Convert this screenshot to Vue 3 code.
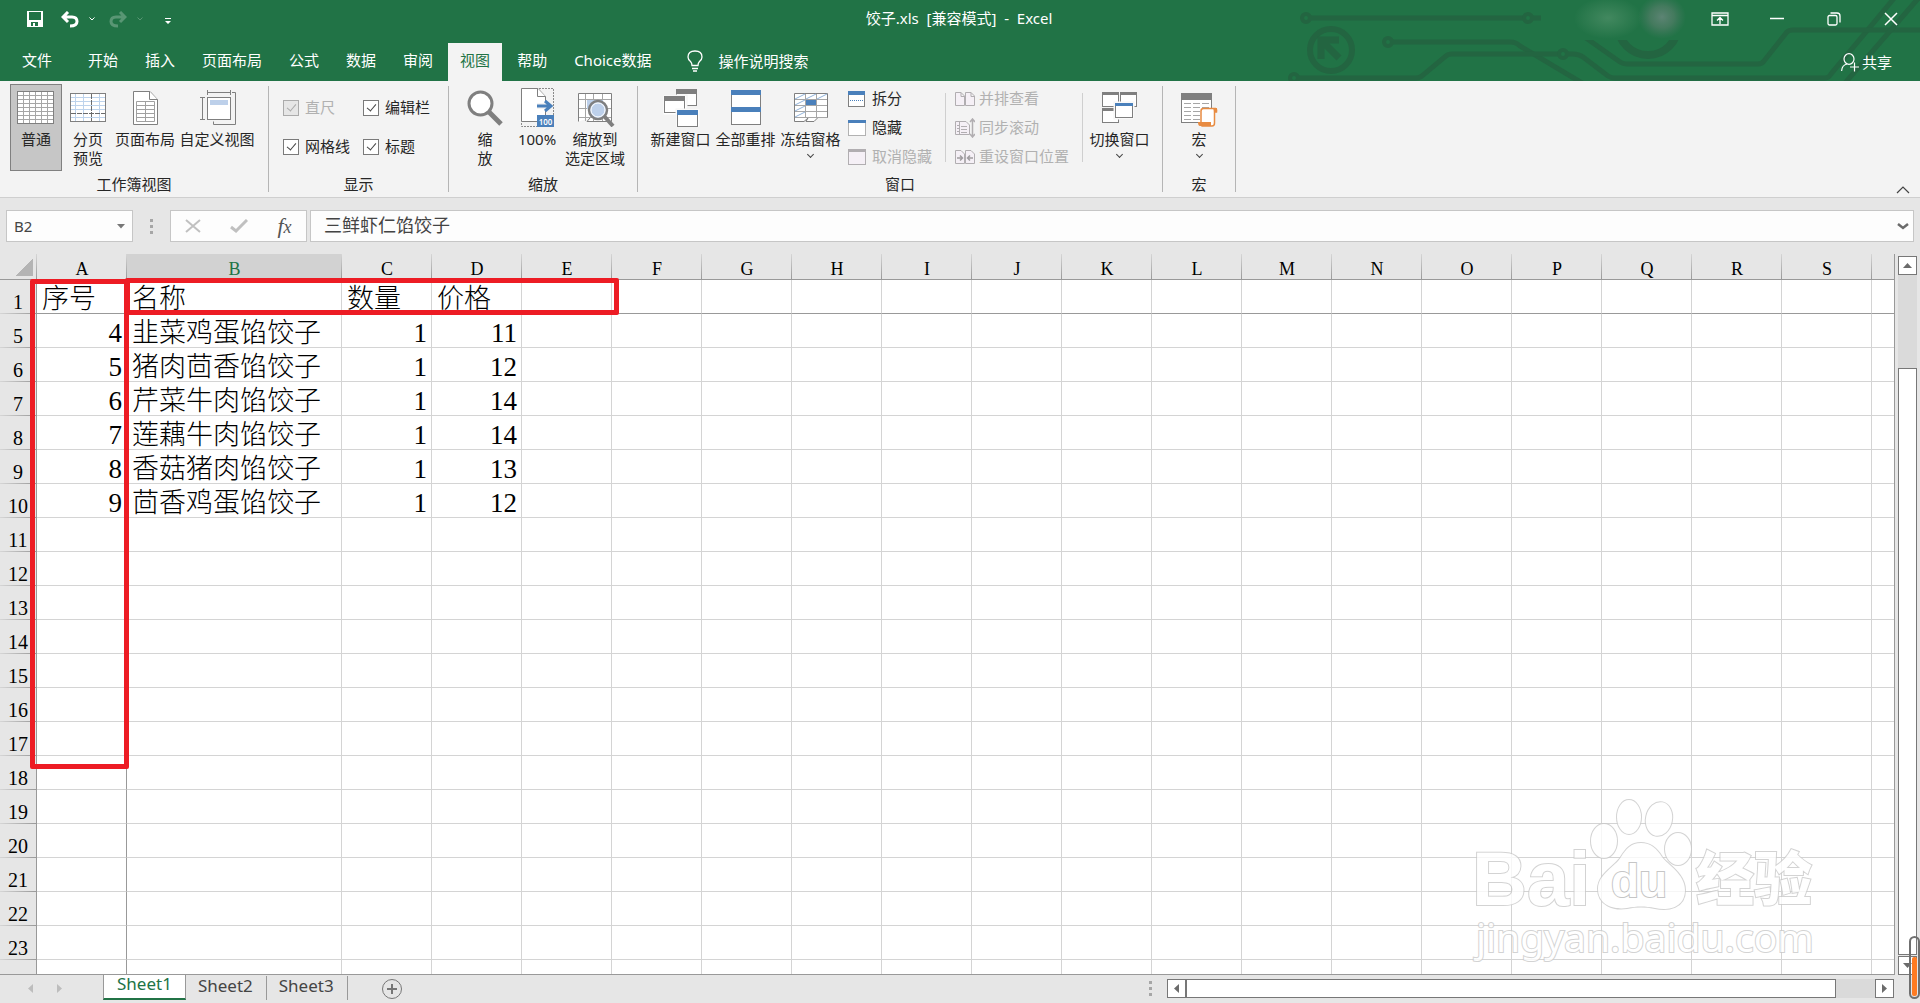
<template>
  <div class="excel">
    <header class="top">
      <svg class="circuit" width="640" height="81" viewBox="0 0 640 81" aria-hidden="true">
        <defs>
          <radialGradient id="glowA"><stop offset="0" stop-color="#42885f" /><stop offset="1" stop-color="#42885f" stop-opacity="0" /></radialGradient>
          <radialGradient id="glowB"><stop offset="0" stop-color="#5d8474" /><stop offset="0.5" stop-color="#4d7c64" stop-opacity="0.8" /><stop offset="1" stop-color="#42785f" stop-opacity="0" /></radialGradient>
        </defs>
        <g fill="none" stroke="#236541" stroke-width="5">
          <circle cx="26" cy="18" r="4" stroke-width="4" />
          <path d="M31 18H243" />
          <circle cx="248" cy="18" r="4" stroke-width="4" />
          <path d="M253 18H265" />
          <circle cx="51" cy="50" r="21" stroke-width="6" />
          <path d="M41 59V40H59M42 41L59 58" stroke-width="7" />
          <circle cx="108" cy="42" r="4" stroke-width="4" />
          <path d="M113 42H230Q236 42 240 46L302 83" />
          <circle cx="14" cy="78" r="4" stroke-width="4" />
          <path d="M19 78H136Q140 78 143 75L166 56Q168 54 172 54H278" />
          <circle cx="283" cy="54" r="4" stroke-width="4" />
          <path d="M288 54H293Q299 54 303 57L328 76Q331 78 335 78H545Q549 78 551 74L616 -4" />
          <path d="M306 38L340 62Q343 64 347 64H478Q482 64 484 61L507 32Q509 30 513 30H640" />
          <path d="M565 83L642 -6" />
          <circle cx="368" cy="25" r="30" stroke-width="8" />
        </g>
        <rect x="261" width="157" height="40" fill="#217346" />
        <ellipse cx="328" cy="18" rx="34" ry="21" fill="url(#glowA)" />
        <ellipse cx="382" cy="17" rx="24" ry="22" fill="url(#glowB)" />
      </svg>

      <div class="titlebar">
        <div class="quick">
          <button type="button" class="qa save" aria-label="保存">
            <svg width="16" height="16" viewBox="0 0 16 16"><path fill="#fff" fill-rule="evenodd" d="M0 0H16V16H0ZM2 1V9H14V1ZM4 11V15H6V12H8V15H11V11Z" /></svg>
          </button>
          <button type="button" class="qa undo" aria-label="撤消">
            <svg width="18" height="17" viewBox="0 0 18 17"><path fill="none" stroke="#fff" stroke-width="3" d="M7 1L2 6L7 11M2 6H11Q16 6 16 10.500Q16 15 9 15" /></svg>
          </button>
          <button type="button" class="qa drop" aria-label="撤消列表">
            <svg width="6" height="4" viewBox="0 0 6 4"><path fill="none" stroke="#fff" d="M0.500 0.500L3 3L5.500 0.500" /></svg>
          </button>
          <button type="button" class="qa undo dim" aria-label="恢复">
            <svg width="18" height="17" viewBox="0 0 18 17"><path fill="none" stroke="#fff" stroke-width="3" d="M11 1L16 6L11 11M16 6H7Q2 6 2 10.500Q2 15 9 15" /></svg>
          </button>
          <button type="button" class="qa drop dim" aria-label="恢复列表">
            <svg width="6" height="4" viewBox="0 0 6 4"><path fill="none" stroke="#fff" d="M0.500 0.500L3 3L5.500 0.500" /></svg>
          </button>
          <button type="button" class="qa more" aria-label="自定义快速访问工具栏">
            <svg width="6" height="7" viewBox="0 0 6 7"><path fill="#fff" d="M0 0H6V1H0ZM0 3H6L3 6Z" /></svg>
          </button>
        </div>
        <div class="doc-title">饺子.xls&nbsp; [兼容模式]&nbsp; -&nbsp; Excel</div>
        <div class="win-buttons">
          <button type="button" aria-label="功能区显示选项">
            <svg width="18" height="14" viewBox="0 0 18 14"><path fill="none" stroke="#fff" stroke-width="1.300" d="M1 1H17V13H1ZM1 3.500H17M9 12V6M6 8.500L9 5.500L12 8.500" /></svg>
          </button>
          <button type="button" aria-label="最小化">
            <svg width="14" height="14" viewBox="0 0 14 14"><path stroke="#fff" stroke-width="1.500" d="M0 6.500H14" /></svg>
          </button>
          <button type="button" aria-label="还原">
            <svg width="14" height="14" viewBox="0 0 14 14"><g fill="none" stroke="#fff" stroke-width="1.300"><rect x="1" y="3.500" width="9" height="9.500" rx="1.500" /><path d="M3.500 1H10Q13 1 13 4V10.500" /></g></svg>
          </button>
          <button type="button" aria-label="关闭">
            <svg width="14" height="14" viewBox="0 0 14 14"><path stroke="#fff" stroke-width="1.500" d="M1 1L13 13M13 1L1 13" /></svg>
          </button>
        </div>
      </div>

      <nav class="tabs">
        <button v-for="tab in tabs" :key="tab" type="button" class="tab" :class="{ active: tab === activeTab, file: tab === '文件' }" @click="activeTab = tab">{{ tab }}</button>
        <button type="button" class="tell-me">
          <svg width="16" height="22" viewBox="0 0 16 22"><path fill="none" stroke="#fff" stroke-width="1.300" d="M5 15.500Q5 13 3.500 11.500Q1 9.500 1 7Q1 1 8 1Q15 1 15 7Q15 9.500 12.500 11.500Q11 13 11 15.500ZM5 18.500H11M6 21H10" /></svg>
          <span>操作说明搜索</span>
        </button>
        <button type="button" class="share">
          <svg width="18" height="19" viewBox="0 0 18 19"><g fill="none" stroke="#fff" stroke-width="1.200"><ellipse cx="8" cy="6" rx="5" ry="5.300" /><path d="M0.600 18Q1 12 6 11M13.500 9.500V18.500M9 14H18" /></g></svg>
          <span>共享</span>
        </button>
      </nav>
    </header>

    <section class="ribbon">
      <div class="group">
        <div class="tools">
          <button type="button" class="big w52 pressed">
            <svg width="40" height="40" viewBox="0 0 40 40"><rect x="1.500" y="4.500" width="36" height="32" fill="#fff" stroke="#7f7f7f" /><path stroke="#a6a6a6" d="M7.500 5V36M13.500 5V36M19.500 5V36M25.500 5V36M31.500 5V36M2 8.500H37M2 12.500H37M2 16.500H37M2 20.500H37M2 24.500H37M2 28.500H37M2 32.500H37" /></svg>
            <span>普通</span>
          </button>
          <button type="button" class="big w52">
            <svg width="40" height="40" viewBox="0 0 40 40"><rect x="2.500" y="6.500" width="35" height="28" fill="#fff" stroke="#7f7f7f" /><path stroke="#bdd3ec" d="M7.500 7V34M15.500 7V34M31.500 7V34M3 10.500H37M3 14.500H37M3 18.500H37M3 22.500H37M3 30.500H37" /><path stroke="#6b6b6b" stroke-dasharray="5 1" d="M23.500 7V34M3 26.500H37" /></svg>
            <span>分页<br>预览</span>
          </button>
          <button type="button" class="big w62">
            <svg width="40" height="40" viewBox="0 0 40 40"><path fill="#fff" stroke="#7f7f7f" d="M8.500 4.500H25L32.500 12.500V37.500H8.500Z" /><path fill="#fff" stroke="#7f7f7f" d="M24.500 4.500V12.500H32.500" /><path fill="none" stroke="#a0a0a0" d="M11.500 14.500H29.500V34.500H11.500ZM20.500 15V34M12 18.500H29M12 22.500H29M12 26.500H29M12 30.500H29" /></svg>
            <span>页面布局</span>
          </button>
          <button type="button" class="big w82">
            <svg width="40" height="40" viewBox="0 0 40 40"><path fill="none" stroke="#7f7f7f" d="M10.500 5.500H33.500M10.500 3V8M33.500 3V8M5.500 10.500V32.500M3 10.500H8M3 32.500H8M35 5.500H38.500V37.500H16.500V34.500" /><rect x="10.500" y="10.500" width="23" height="22" fill="#fff" stroke="#7f7f7f" /><rect x="13" y="13" width="18" height="5" fill="#bdd0ea" /></svg>
            <span>自定义视图</span>
          </button>
        </div>
        <div class="caption">工作簿视图</div>
      </div>

      <div class="group">
        <div class="tools checks">
          <label v-for="opt in showOptions" :key="opt.text" :class="{ off: opt.disabled }">
            <input type="checkbox" v-model="opt.on" :disabled="opt.disabled">
            <span>{{ opt.text }}</span>
          </label>
        </div>
        <div class="caption">显示</div>
      </div>

      <div class="group">
        <div class="tools">
          <button type="button" class="big w52">
            <svg width="40" height="40" viewBox="0 0 40 40"><path stroke="#7f7f7f" stroke-width="5" d="M23 24L36 37" /><circle cx="15.500" cy="16.500" r="11.500" fill="#fff" stroke="#7f7f7f" stroke-width="3" /></svg>
            <span>缩<br>放</span>
          </button>
          <button type="button" class="big w52">
            <svg width="40" height="40" viewBox="0 0 40 40"><path fill="none" stroke="#8a8a8a" stroke-dasharray="2 1" d="M22 1.500H36.500V28M4.500 36V39.500H20" /><path fill="#fff" stroke="#7f7f7f" d="M20 34.500H4.500V1.500H21L28.500 9.500V34.500Z" /><path fill="#fff" stroke="#7f7f7f" d="M20.500 1.500V9.500H28.500" /><path fill="none" stroke="#f3f3f3" stroke-width="6" d="M20 19H35" /><path fill="none" stroke="#4a80bb" stroke-width="3" d="M20 19H34M28 14L34 19L28 24" /><rect x="20" y="28" width="17" height="12" fill="#4a80bb" /><text x="28.500" y="37.500" font-size="8" font-weight="600" text-anchor="middle" fill="#fff">100</text></svg>
            <span>100%</span>
          </button>
          <button type="button" class="big w64">
            <svg width="40" height="40" viewBox="0 0 40 40"><path fill="#fff" stroke="#7f7f7f" d="M3.500 34.500V6.500H36.500V34.500H12L15 31" /><path stroke="#a6a6a6" d="M10.500 7V34M18.500 7V34M27.500 7V34M4 12.500H36M4 21.500H36M4 30.500H36" /><rect x="12" y="13" width="16" height="9" fill="#bdd0ea" /><path stroke="#7f7f7f" stroke-width="4" d="M29 29L38 39" /><circle cx="23" cy="23" r="9" fill="#bdd0ea" stroke="#7f7f7f" stroke-width="2.500" /><circle cx="23" cy="23" r="7" fill="none" stroke="#fff" /></svg>
            <span>缩放到<br>选定区域</span>
          </button>
        </div>
        <div class="caption">缩放</div>
      </div>

      <div class="group">
        <div class="tools">
          <button type="button" class="big w65">
            <svg width="40" height="40" viewBox="0 0 40 40">
              <g fill="#fff" stroke="#7f7f7f"><rect x="15.500" y="2.500" width="20" height="16" /><path d="M15.500 4.500H35.500" stroke-width="5" /><rect x="2" y="8" width="24" height="20" stroke="#f3f3f3" /><rect x="3.500" y="9.500" width="20" height="16" /><path d="M3.500 11.500H23.500" stroke-width="5" /><rect x="15" y="22" width="24" height="18" stroke="#f3f3f3" /><rect x="16.500" y="23.500" width="20" height="16" /><path d="M16 25.500H37" stroke="#4a80bb" stroke-width="5" /></g>
            </svg>
            <span>新建窗口</span>
          </button>
          <button type="button" class="big w65">
            <svg width="40" height="40" viewBox="0 0 40 40"><rect x="5.500" y="3.500" width="29" height="34" fill="#fff" stroke="#7f7f7f" /><path fill="#4a80bb" d="M5 3H35V8H5ZM5 20H35V25H5Z" /></svg>
            <span>全部重排</span>
          </button>
          <button type="button" class="big w65">
            <svg width="40" height="40" viewBox="0 0 40 40"><path fill="#fff" stroke="#7f7f7f" d="M3.500 6.500H36.500V30.500H27L23 34.500H15L17 31L13 34.500H3.500Z" /><path stroke="#a6a6a6" d="M14.500 7V31M25.500 7V31M4 12.500H36M4 18.500H36M4 24.500H36M4 30.500H36" /><path stroke="#8fb2da" d="M4 12L14 7M15 12L25 7M26 12L36 7M4 18L14 13M4 24L14 19M4 30L14 25" /><rect x="15" y="13" width="10" height="5" fill="#4a80bb" /></svg>
            <span>冻结窗格</span>
            <i class="arrow"></i>
          </button>
          <div class="small-list">
            <button type="button" class="small">
              <svg width="18" height="18" viewBox="0 0 18 18"><rect x="0.500" y="1.500" width="16" height="15" fill="#fff" stroke="#7f7f7f" /><path fill="#4a80bb" d="M0 1H17V5H0Z" /><path stroke="#4a80bb" stroke-dasharray="1 1" d="M2 10.500H16" /></svg>
              <span>拆分</span>
            </button>
            <button type="button" class="small">
              <svg width="18" height="18" viewBox="0 0 18 18"><rect x="0.500" y="1.500" width="17" height="15" fill="#fff" stroke="#6b6b6b" stroke-dasharray="1 1" /><path fill="#4a80bb" d="M0 1H18V4H0Z" /></svg>
              <span>隐藏</span>
            </button>
            <button type="button" class="small" disabled>
              <svg width="18" height="18" viewBox="0 0 18 18"><rect x="0.500" y="1.500" width="17" height="15" fill="#f5f0f6" stroke="#b1aeb1" /><path fill="#b1aeb1" d="M0 1H18V4H0Z" /></svg>
              <span>取消隐藏</span>
            </button>
          </div>
          <div class="small-list ruled">
            <button type="button" class="small" disabled>
              <svg width="20" height="18" viewBox="0 0 20 18"><path fill="#f5f0f6" stroke="#b1aeb1" d="M0.500 2.500H6L9.500 6V15.500H0.500ZM10.500 2.500H16L19.500 6V15.500H10.500ZM6 2.500V6.500H9M16 2.500V6.500H19" /></svg>
              <span>并排查看</span>
            </button>
            <button type="button" class="small" disabled>
              <svg width="20" height="20" viewBox="0 0 20 20"><path fill="#f5f0f6" stroke="#b1aeb1" d="M5 3.500H0.500V16.500H5M4.500 3.500H11L14.500 7V16.500H4.500ZM6 8.500H12M6 11.500H12M6 14.500H12M2 7.500H4M2 10.500H4M2 13.500H4" /><path fill="none" stroke="#b1aeb1" stroke-width="1.500" d="M17.500 1V19M15 4L17.500 1L20 4M15 16L17.500 19L20 16" /></svg>
              <span>同步滚动</span>
            </button>
            <button type="button" class="small" disabled>
              <svg width="20" height="18" viewBox="0 0 20 18"><path fill="#f5f0f6" stroke="#b1aeb1" d="M0.500 2.500H6L9.500 6V15.500H0.500ZM10.500 2.500H16L19.500 6V15.500H10.500Z" /><path fill="none" stroke="#9f9c9f" stroke-width="1.500" d="M2 10H7.500M5 7.500L7.500 10L5 12.500M18 10H12.500M15 7.500L12.500 10L15 12.500" /></svg>
              <span>重设窗口位置</span>
            </button>
          </div>
          <button type="button" class="big w65">
            <svg width="40" height="40" viewBox="0 0 40 40">
              <g fill="#fff" stroke="#7f7f7f"><rect x="2.500" y="5.500" width="16" height="14" /><path d="M2 6.500H19" stroke-width="3" /><rect x="20.500" y="5.500" width="16" height="14" /><path d="M20 6.500H37" stroke-width="3" /><rect x="2.500" y="21.500" width="16" height="14" /><path d="M2 22.500H19" stroke-width="3" /><rect x="14" y="15" width="20" height="17" stroke="#f3f3f3" /><rect x="15.500" y="16.500" width="17" height="14" /><path d="M15 17.500H33" stroke="#4a80bb" stroke-width="3" /></g>
            </svg>
            <span>切换窗口</span>
            <i class="arrow"></i>
          </button>
        </div>
        <div class="caption">窗口</div>
      </div>

      <div class="group">
        <div class="tools">
          <button type="button" class="big w52">
            <svg width="40" height="40" viewBox="0 0 40 40"><rect x="2.500" y="6.500" width="30" height="29" fill="#fff" stroke="#7f7f7f" /><path fill="#7f7f7f" d="M2 6H33V13H2Z" /><path stroke="#a6a6a6" stroke-dasharray="7 2" d="M5 16.500H30M5 20.500H30M5 24.500H30M5 28.500H30M5 32.500H30" /><path fill="#fff" stroke="#e88b41" stroke-width="1.500" d="M22 36V24Q22 21.500 24.500 21.500H36.500Q38 22 37.500 25H35.500V36Q35.500 39 33 39H23Z" /><path fill="#e88b41" d="M19 35H32V39H21Q19 39 19 35ZM34 21H38V25H35Z" /></svg>
            <span>宏</span>
            <i class="arrow"></i>
          </button>
        </div>
        <div class="caption">宏</div>
      </div>

      <button type="button" class="collapse" aria-label="折叠功能区">
        <svg width="14" height="8" viewBox="0 0 14 8"><path fill="none" stroke="#444" stroke-width="1.200" d="M1 7L7 1L13 7" /></svg>
      </button>
    </section>

    <section class="formula-bar">
      <div class="name-box">
        <input type="text" v-model="cellName" aria-label="名称框">
        <svg width="8" height="5" viewBox="0 0 8 5"><path fill="#777" d="M0 0H8L4 4.500Z" /></svg>
      </div>
      <i class="grip"></i>
      <div class="fx-buttons">
        <button type="button" aria-label="取消"><svg width="16" height="14" viewBox="0 0 16 14"><path stroke="#c0c0c0" stroke-width="2" d="M1 1L15 13M15 1L1 13" /></svg></button>
        <button type="button" aria-label="输入"><svg width="18" height="14" viewBox="0 0 18 14"><path fill="none" stroke="#c0c0c0" stroke-width="3" d="M1 8L6 12L17 1" /></svg></button>
        <button type="button" class="fx" aria-label="插入函数">f<small>x</small></button>
      </div>
      <div class="formula">
        <input type="text" v-model="formula" aria-label="编辑栏">
        <svg width="12" height="7" viewBox="0 0 12 7"><path fill="none" stroke="#6b6b6b" stroke-width="2.500" d="M1 1L6 5L11 1" /></svg>
      </div>
    </section>

    <main class="sheet">
      <div class="grid">
        <table>
          <colgroup>
            <col class="c-head"><col class="c-std"><col class="c-name">
            <col v-for="n in 17" :key="n" class="c-std"><col>
          </colgroup>
          <thead>
            <tr>
              <th class="corner"></th>
              <th v-for="c in columns" :key="c" :class="{ selected: c === 'B' }">{{ c }}</th>
              <th></th>
            </tr>
          </thead>
          <tbody>
            <tr v-for="row in rows" :key="row.no" :class="{ frozen: row.no === 1 }">
              <th>{{ row.no }}</th>
              <td v-for="(c, i) in columns" :key="c" :class="{ num: typeof row.cells[i] === 'number' }">{{ row.cells[i] }}</td>
              <td></td>
            </tr>
            <tr><th></th><td v-for="c in columns" :key="c"></td><td></td></tr>
          </tbody>
        </table>
        <div class="mark mark-col"></div>
        <div class="mark mark-row"></div>
        <svg class="watermark" width="360" height="180" viewBox="0 0 360 180" aria-hidden="true">
          <g fill="#fff" stroke="#c9c9c9" stroke-width="2" paint-order="stroke">
            <text class="wm-bold" x="12" y="111" font-size="76">Bai</text>
            <ellipse cx="144" cy="47" rx="13" ry="17" />
            <ellipse cx="169" cy="23" rx="12" ry="17" />
            <ellipse cx="199" cy="25" rx="13" ry="17" transform="rotate(12 199 25)" />
            <ellipse cx="218" cy="55" rx="13" ry="16" />
            <path d="M181 49C191 49 197 55 202 63C208 71 225 80 225 96C225 114 208 117 195 114C185 112 177 112 167 114C154 116 138 111 138 95C138 80 155 73 161 63C166 55 171 49 181 49Z" />
            <text class="wm-bold" x="151" y="103" font-size="46" stroke="#b8b8b8">du</text>
            <text class="wm-cjk" x="236" y="106" font-size="58">经验</text>
            <text x="16" y="158" font-size="39">jingyan.baidu.com</text>
          </g>
        </svg>
      </div>
      <div class="vscroll">
        <button type="button" aria-label="向上滚动"><svg width="9" height="5" viewBox="0 0 9 5"><path fill="#6b6b6b" d="M0 5H9L4.500 0Z" /></svg></button>
        <div class="v-track"></div>
        <div class="v-thumb"></div>
        <button type="button" aria-label="向下滚动"><svg width="9" height="5" viewBox="0 0 9 5"><path fill="#6b6b6b" d="M0 0H9L4.500 5Z" /></svg></button>
      </div>
    </main>

    <footer class="bottom">
      <div class="sheet-nav">
        <button type="button" aria-label="上一个工作表"><svg width="5" height="9" viewBox="0 0 5 9"><path fill="#bdbdbd" d="M5 0V9L0 4.500Z" /></svg></button>
        <button type="button" aria-label="下一个工作表"><svg width="5" height="9" viewBox="0 0 5 9"><path fill="#bdbdbd" d="M0 0V9L5 4.500Z" /></svg></button>
      </div>
      <button v-for="s in sheets" :key="s" type="button" class="sheet-tab" :class="{ current: s === activeSheet }" @click="activeSheet = s">{{ s }}</button>
      <button type="button" class="add" aria-label="新工作表">
        <svg width="22" height="22" viewBox="0 0 22 22"><g fill="none" stroke="#777"><circle cx="11" cy="11" r="9.500" /><path stroke-width="2" d="M11 6V16M6 11H16" /></g></svg>
      </button>
      <i class="grip"></i>
      <div class="hscroll">
        <button type="button" aria-label="向左滚动"><svg width="5" height="9" viewBox="0 0 5 9"><path fill="#6b6b6b" d="M5 0V9L0 4.500Z" /></svg></button>
        <div class="h-thumb"></div>
        <div class="h-track"></div>
        <button type="button" aria-label="向右滚动"><svg width="5" height="9" viewBox="0 0 5 9"><path fill="#6b6b6b" d="M0 0V9L5 4.500Z" /></svg></button>
      </div>
    </footer>
    <div class="meter"><i></i></div>
  </div>
</template>

<script setup>
import { ref } from 'vue';

const tabs = ['文件', '开始', '插入', '页面布局', '公式', '数据', '审阅', '视图', '帮助', 'Choice数据'];
const activeTab = ref('视图');

const showOptions = ref([
  { text: '直尺', on: true, disabled: true },
  { text: '编辑栏', on: true, disabled: false },
  { text: '网格线', on: true, disabled: false },
  { text: '标题', on: true, disabled: false },
]);

const cellName = ref('B2');
const formula = ref('三鲜虾仁馅饺子');

const columns = 'ABCDEFGHIJKLMNOPQRS'.split('');

// rows 2-4 are scrolled away under the frozen first row
const rows = [
  { no: 1, cells: ['序号', '名称', '数量', '价格'] },
  { no: 5, cells: [4, '韭菜鸡蛋馅饺子', 1, 11] },
  { no: 6, cells: [5, '猪肉茴香馅饺子', 1, 12] },
  { no: 7, cells: [6, '芹菜牛肉馅饺子', 1, 14] },
  { no: 8, cells: [7, '莲藕牛肉馅饺子', 1, 14] },
  { no: 9, cells: [8, '香菇猪肉馅饺子', 1, 13] },
  { no: 10, cells: [9, '茴香鸡蛋馅饺子', 1, 12] },
];
for (let no = 11; no <= 23; no++) {
  rows.push({ no, cells: [] });
}

const sheets = ['Sheet1', 'Sheet2', 'Sheet3'];
const activeSheet = ref('Sheet1');
</script>

<style>
body {
  margin: 0;
}
</style>

<style scoped>
.excel {
  position: relative;
  display: flex;
  flex-direction: column;
  height: 100vh;
  overflow: hidden;
  background: #e6e6e6;
  color: #262626;
  font: 15px/19px "Noto Sans", "Noto Sans CJK SC", sans-serif;
}

*,
*::after {
  box-sizing: border-box;
}

button,
input {
  font: inherit;
  color: inherit;
}

button {
  padding: 0;
  border: 0;
  background: none;
}

svg {
  display: block;
  flex: none;
}

/* title bar and tabs */
.top {
  position: relative;
  background: #217346;
  color: #fff;
}

.circuit {
  position: absolute;
  top: 0;
  right: 0;
}

.titlebar {
  position: relative;
  display: grid;
  grid-template-columns: 1fr auto 1fr;
  height: 43px;
  padding-bottom: 5px;
}

.quick,
.win-buttons {
  display: flex;
  align-items: center;
}

.quick {
  padding-left: 27px;
}

.undo {
  margin-left: 18px;
}

.drop {
  margin: 0 -4px 0 10px;
}

.more {
  margin: 4px 0 0 26px;
}

.dim {
  opacity: 0.25;
}

.doc-title {
  align-self: center;
  padding: 0 2px 1px 0;
}

.win-buttons {
  justify-content: flex-end;
  padding-right: 1px;
}

.win-buttons button {
  display: flex;
  justify-content: center;
  width: 57px;
}

.tabs {
  position: relative;
  display: flex;
  gap: 3px;
  height: 38px;
}

.tab {
  padding: 0 12px 3px;
}

.tab.file {
  margin-right: 9px;
  padding-left: 22px;
}

.tab.active {
  background: #f3f3f3;
  color: #217346;
}

.tell-me {
  display: flex;
  align-items: center;
  gap: 16px;
  margin-left: 20px;
  padding-bottom: 2px;
}

.share {
  display: flex;
  align-items: center;
  gap: 3px;
  margin: 0 28px 0 auto;
}

/* ribbon */
.ribbon {
  position: relative;
  display: flex;
  height: 117px;
  background: #f3f3f3;
  border-bottom: 1px solid #cfcfcf;
}

.group {
  display: flex;
  flex-direction: column;
  height: 106px;
  margin-top: 5px;
  padding: 0 10px;
  border-right: 1px solid #b5b5b5;
}

.tools {
  display: flex;
  flex: none;
  height: 87px;
  margin-top: -2px;
}

.caption {
  margin-top: 4px;
  text-align: center;
}

.big {
  display: flex;
  flex-direction: column;
  align-items: center;
  gap: 3px;
  padding-top: 2px;
  border: 1px solid transparent;
  white-space: nowrap;
}

.w52 {
  width: 52px;
}

.w62 {
  width: 62px;
}

.w64 {
  width: 64px;
}

.w65 {
  width: 65px;
}

.w82 {
  width: 82px;
}

.pressed {
  background: #c6c6c6;
  border-color: #808080;
}

.arrow {
  width: 5px;
  height: 5px;
  border: solid #444;
  border-width: 0 1px 1px 0;
  transform: rotate(45deg);
}

.checks {
  display: grid;
  grid-template-columns: 80px 71px;
  grid-template-rows: 39px 39px;
  padding: 4px;
}

.checks label {
  display: flex;
  align-items: center;
  gap: 6px;
  white-space: nowrap;
}

.checks input {
  position: relative;
  width: 16px;
  height: 16px;
  margin: 0;
  appearance: none;
  background: #fff;
  border: 1px solid #7a7a7a;
}

.checks input:checked::after {
  content: "";
  position: absolute;
  top: 1px;
  left: 5px;
  width: 5px;
  height: 9px;
  border: solid #444;
  border-width: 0 1px 1px 0;
  transform: rotate(40deg);
}

.checks .off {
  color: #b1b1b1;
}

.checks .off input {
  background: #e6e6e6;
  border-color: #ababab;
}

.checks .off input:checked::after {
  border-color: #ababab;
}

.small-list {
  display: flex;
  flex-direction: column;
  height: 87px;
  padding: 0 13px 0 5px;
}

.small-list.ruled {
  height: 69px;
  margin: 9px 4px 0 0;
  padding-left: 9px;
  border: solid #cfcfcf;
  border-width: 0 1px;
}

.small-list.ruled .small {
  gap: 4px;
}

.small-list.ruled .small:first-child {
  margin-top: -9px;
}

.small {
  display: flex;
  flex: none;
  align-items: center;
  gap: 6px;
  height: 29px;
  white-space: nowrap;
}

.small:disabled {
  color: #b1b1b1;
}

.collapse {
  align-self: flex-end;
  margin: 0 10px 3px auto;
}

/* formula bar */
.formula-bar {
  display: flex;
  align-items: center;
  height: 56px;
  padding: 0 6px;
}

.name-box,
.fx-buttons,
.formula {
  display: flex;
  align-items: center;
  height: 32px;
  background: #fdfdfd;
  border: 1px solid #c6c6c6;
}

.name-box {
  width: 127px;
  padding: 0 7px;
}

.name-box input,
.formula input {
  flex: 1;
  min-width: 0;
  padding: 0;
  border: 0;
  outline: 0;
  background: none;
  color: #444;
}

.grip {
  width: 3px;
  height: 15px;
  margin: 0 17px;
  background: repeating-linear-gradient(#a6a6a6 0 3px, transparent 3px 6px);
}

.fx-buttons {
  justify-content: space-around;
  width: 137px;
}

.fx {
  color: #555;
  font: italic 22px/24px "Liberation Serif", serif;
}

.fx small {
  font-size: 18px;
}

.formula {
  flex: 1;
  margin-left: 3px;
  padding: 0 4px 0 13px;
}

.formula input {
  padding-bottom: 2px;
  font-size: 18px;
}

/* cells */
.sheet {
  display: flex;
  flex: 1;
  min-height: 0;
}

.grid {
  position: relative;
  flex: 1;
  overflow: hidden;
  border: solid #999;
  border-width: 0 1px 1px 0;
  background: #fff;
}

table {
  width: 100%;
  table-layout: fixed;
  border-collapse: separate;
  border-spacing: 0;
  font-family: "Liberation Serif", "Noto Sans CJK SC", serif;
}

.c-head {
  width: 37px;
}

.c-std {
  width: 90px;
}

.c-name {
  width: 215px;
}

th {
  padding: 0;
  background: #e6e6e6;
  color: #000;
  font-size: 20px;
  font-weight: 400;
  line-height: 20px;
}

thead th {
  height: 26px;
  padding-top: 4px;
  border-bottom: 1px solid #999;
  background: linear-gradient(#d6d6d6, #999) right / 1px 100% no-repeat #e6e6e6;
  font-size: 18px;
}

thead th:last-child {
  background: #e6e6e6;
}

thead th.selected {
  background-color: #d2d2d2;
  color: #217346;
}

thead .corner {
  background: linear-gradient(135deg, transparent 50%, #b4b4b4 50%) 15px 5px / 18px 17px no-repeat, linear-gradient(#d6d6d6, #999) right / 1px 100% no-repeat #e6e6e6;
}

tbody th {
  padding-bottom: 2px;
  border-right: 1px solid #999;
  background: linear-gradient(90deg, #d6d6d6, #999) bottom / 100% 1px no-repeat #e6e6e6;
  vertical-align: bottom;
}

td {
  height: 34px;
  padding: 6px 4px 0 5px;
  border: solid #d4d4d4;
  border-width: 0 1px 1px 0;
  color: #000;
  font-size: 27px;
  font-weight: 300;
  line-height: 27px;
  white-space: nowrap;
}

td:nth-child(2) {
  border-right-color: #999;
}

td:last-child {
  border-right: 0;
}

.frozen td {
  border-bottom-color: #999;
}

td.num {
  text-align: right;
}

.mark {
  position: absolute;
  border: 5px solid #ed1c24;
  border-radius: 2px;
}

.mark-col {
  top: 25px;
  left: 30px;
  width: 99px;
  height: 490px;
}

.mark-row {
  top: 24px;
  left: 125px;
  width: 494px;
  height: 37px;
}

.watermark {
  position: absolute;
  right: 74px;
  bottom: 0;
  font-family: "Noto Sans", sans-serif;
  opacity: 0.8;
}

.wm-bold {
  font-family: "Liberation Sans", sans-serif;
  font-weight: 700;
}

.wm-cjk {
  font-family: "Noto Sans CJK SC", sans-serif;
  font-weight: 900;
}

/* scroll bars */
.vscroll {
  display: flex;
  flex-direction: column;
  width: 19px;
  margin: 2px 3px 0;
}

.vscroll button,
.hscroll button {
  display: flex;
  flex: none;
  align-items: center;
  justify-content: center;
  width: 19px;
  height: 19px;
  border: 1px solid #777;
  background: #fff;
}

.v-track {
  flex: 93;
  background: #dadada;
}

.v-thumb {
  flex: 587;
  margin-bottom: 1px;
  border: 1px solid #777;
  background: #fff;
}

.bottom {
  display: flex;
  flex: none;
  height: 28px;
}

.sheet-nav {
  display: flex;
  gap: 24px;
  width: 103px;
  padding: 0 0 2px 28px;
}

.sheet-tab {
  height: 24px;
  margin-top: 1px;
  padding: 0 13px 7px 12px;
  border-right: 1px solid #999;
  color: #444;
  font-size: 17px;
}

.sheet-tab.current {
  height: 26px;
  margin-top: -1px;
  padding: 0 13px 5px;
  border: solid #999;
  border-width: 0 1px;
  border-bottom: 2px solid #217346;
  background: #fff;
  color: #217346;
}

.add {
  margin-left: 33px;
}

.bottom .grip {
  height: 15px;
  margin: 6px 15px 0 auto;
}

.hscroll {
  display: flex;
  width: calc(38% - 3px);
  margin: 4px 26px 0 0;
}

.h-thumb {
  flex: 649;
  height: 19px;
  border: 1px solid #777;
  background: #fff;
}

.h-track {
  flex: 39;
  height: 19px;
  background: #dadada;
}

.meter {
  position: absolute;
  right: 0;
  bottom: 4px;
  display: flex;
  align-items: flex-end;
  width: 11px;
  height: 63px;
  padding: 1px;
  border: 2px solid #6f6f6f;
  border-radius: 6px;
}

.meter i {
  width: 5px;
  height: 39px;
  border-radius: 2px;
  background: #ff7b22;
}
</style>
